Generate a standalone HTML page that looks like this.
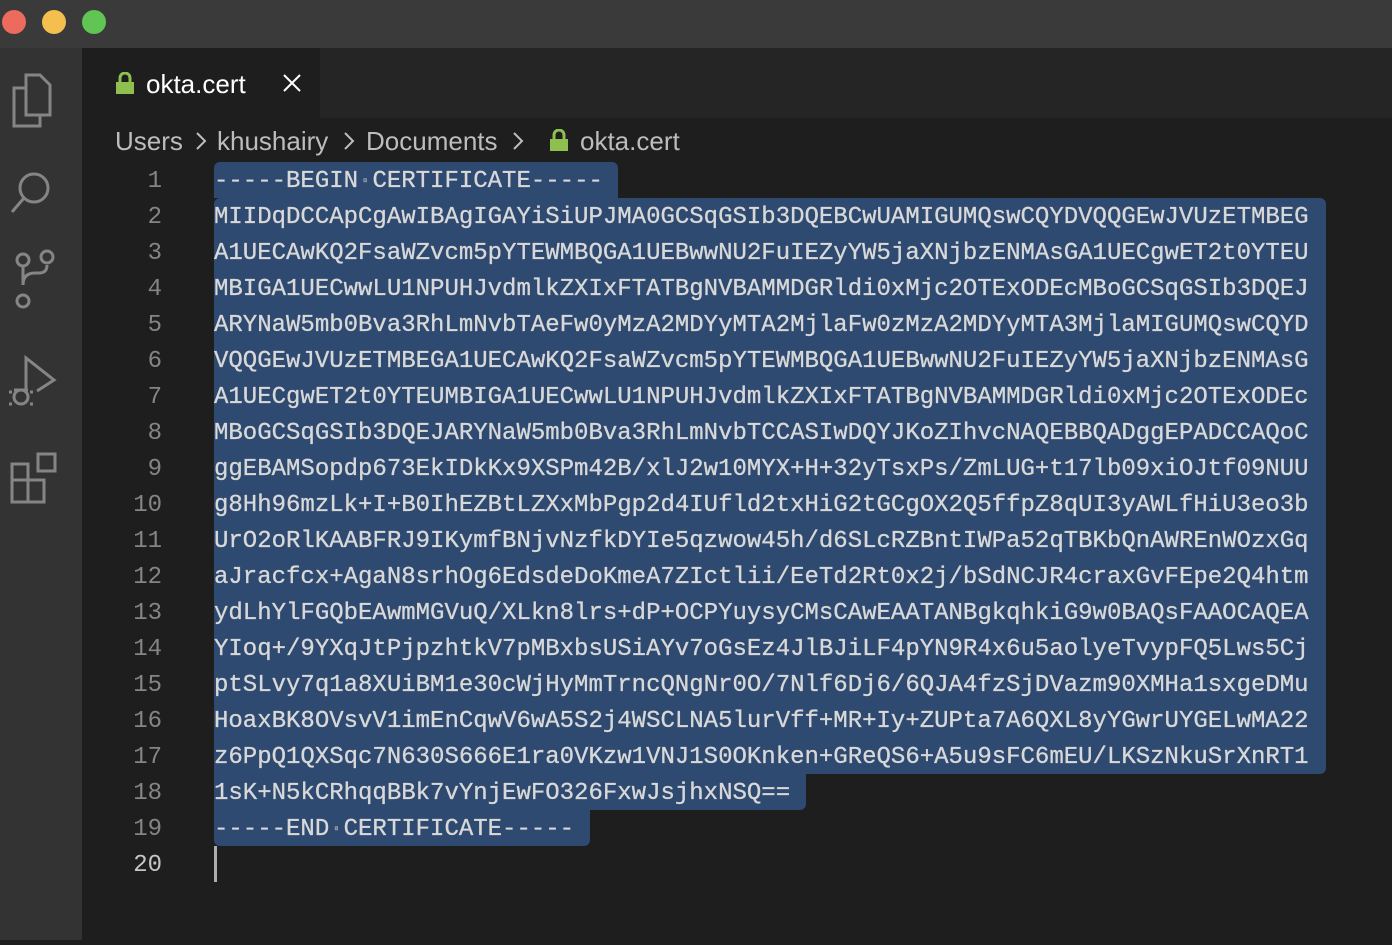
<!DOCTYPE html>
<html><head><meta charset="utf-8"><style>
html,body{margin:0;padding:0;width:1392px;height:940px;overflow:hidden;background:#1e1e1e;font-family:"Liberation Sans",sans-serif}
#title{position:absolute;left:0;top:0;width:1392px;height:48px;background:#3a3a3a}
.dot{position:absolute;top:10px;width:24px;height:24px;border-radius:50%}
#act{position:absolute;left:0;top:48px;width:82px;height:892px;background:#333333}
#tabs{position:absolute;left:82px;top:48px;width:1310px;height:70px;background:#252526}
#tab{position:absolute;left:0;top:0;width:238px;height:70px;background:#1e1e1e;color:#fff;font-size:26px}
.cr{position:absolute;top:126px;color:#bdbdbd;font-size:26px;white-space:nowrap}
.ln{position:absolute;left:100px;width:62px;text-align:right;color:#858585;font-family:"Liberation Mono",monospace;font-size:24px;line-height:36px}
.code{position:absolute;left:214px;font-family:"Liberation Mono",monospace;font-size:24px;line-height:36px;color:#d8d8d8;white-space:pre;-webkit-text-stroke:0.3px #d8d8d8}
.sel{position:absolute;left:214px;height:36px;background:#2f4a70}
</style></head><body>
<div id="title">
<div class="dot" style="left:2px;background:#ec6a5e"></div>
<div class="dot" style="left:42px;background:#f4bf4f"></div>
<div class="dot" style="left:82px;background:#61c554"></div>
</div>
<div id="act">
<svg width="82" height="892" fill="none" stroke="#858585" stroke-width="3">
<path d="M26 27 h14 l10 10 v30 h-24z M26 40 h-12 v38 h26 v-11"/>
<circle cx="34" cy="140" r="14"/><path d="M24 150 L12 164"/>
<path d="M23 217 v20 M23 237 q0-12 12-12 h4 q8 0 8-8"/><circle cx="23" cy="212" r="6"/><circle cx="47" cy="209" r="6"/><circle cx="23" cy="253" r="6"/>
<path d="M26 342 v-32 l28 22 -17 11"/><circle cx="21" cy="349" r="7"/><path d="M12 344 h-3 M30 344 h3 M12 356 h-3 M30 356 h3 M14 342 h14"/>
<path d="M12 432 h32 v22 h-32z M12 432 v-16 h16 v38 M38 406 h17 v17 h-17z"/>
</svg>
</div>
<div id="tabs"><div id="tab">
<svg style="position:absolute;left:34px;top:24px" width="18" height="22"><path d="M4 10 v-4 a5 5 0 0 1 10 0 v4" fill="none" stroke="#8fbf4f" stroke-width="3"/><rect x="0" y="10" width="18" height="12" fill="#8fbf4f"/></svg>
<span style="position:absolute;left:64px;top:21px">okta.cert</span>
<svg style="position:absolute;left:201px;top:26px" width="18" height="18"><path d="M1 1 L17 17 M17 1 L1 17" stroke="#fff" stroke-width="2"/></svg>
</div></div>
<span class="cr" style="left:115px">Users</span>
<svg style="position:absolute;left:195px;top:131px" width="12" height="20"><path d="M2 2 L10 10 L2 18" fill="none" stroke="#bdbdbd" stroke-width="2"/></svg>
<span class="cr" style="left:217px">khushairy</span>
<svg style="position:absolute;left:343px;top:131px" width="12" height="20"><path d="M2 2 L10 10 L2 18" fill="none" stroke="#bdbdbd" stroke-width="2"/></svg>
<span class="cr" style="left:366px">Documents</span>
<svg style="position:absolute;left:512px;top:131px" width="12" height="20"><path d="M2 2 L10 10 L2 18" fill="none" stroke="#bdbdbd" stroke-width="2"/></svg>
<svg style="position:absolute;left:550px;top:129px" width="18" height="22"><path d="M4 10 v-4 a5 5 0 0 1 10 0 v4" fill="none" stroke="#8fbf4f" stroke-width="3"/><rect x="0" y="10" width="18" height="12" fill="#8fbf4f"/></svg>
<span class="cr" style="left:580px">okta.cert</span>

<div class="sel" style="top:162px;width:404px;border-radius:6px 6px 0 0"></div>
<div class="sel" style="top:198px;width:1112px;height:576px;border-radius:6px 6px 6px 0"></div>
<div class="sel" style="top:774px;width:592px;border-radius:0 0 6px 0"></div>
<div class="sel" style="top:810px;width:376px;border-radius:0 0 6px 6px"></div>

<div class="ln" style="top:164px">1<br>2<br>3<br>4<br>5<br>6<br>7<br>8<br>9<br>10<br>11<br>12<br>13<br>14<br>15<br>16<br>17<br>18<br>19<br><span style="color:#c6c6c6">20</span></div>
<div class="code" style="top:164px">-----BEGIN<span style="color:#6a7a90">·</span>CERTIFICATE-----
MIIDqDCCApCgAwIBAgIGAYiSiUPJMA0GCSqGSIb3DQEBCwUAMIGUMQswCQYDVQQGEwJVUzETMBEG
A1UECAwKQ2FsaWZvcm5pYTEWMBQGA1UEBwwNU2FuIEZyYW5jaXNjbzENMAsGA1UECgwET2t0YTEU
MBIGA1UECwwLU1NPUHJvdmlkZXIxFTATBgNVBAMMDGRldi0xMjc2OTExODEcMBoGCSqGSIb3DQEJ
ARYNaW5mb0Bva3RhLmNvbTAeFw0yMzA2MDYyMTA2MjlaFw0zMzA2MDYyMTA3MjlaMIGUMQswCQYD
VQQGEwJVUzETMBEGA1UECAwKQ2FsaWZvcm5pYTEWMBQGA1UEBwwNU2FuIEZyYW5jaXNjbzENMAsG
A1UECgwET2t0YTEUMBIGA1UECwwLU1NPUHJvdmlkZXIxFTATBgNVBAMMDGRldi0xMjc2OTExODEc
MBoGCSqGSIb3DQEJARYNaW5mb0Bva3RhLmNvbTCCASIwDQYJKoZIhvcNAQEBBQADggEPADCCAQoC
ggEBAMSopdp673EkIDkKx9XSPm42B/xlJ2w10MYX+H+32yTsxPs/ZmLUG+t17lb09xiOJtf09NUU
g8Hh96mzLk+I+B0IhEZBtLZXxMbPgp2d4IUfld2txHiG2tGCgOX2Q5ffpZ8qUI3yAWLfHiU3eo3b
UrO2oRlKAABFRJ9IKymfBNjvNzfkDYIe5qzwow45h/d6SLcRZBntIWPa52qTBKbQnAWREnWOzxGq
aJracfcx+AgaN8srhOg6EdsdeDoKmeA7ZIctlii/EeTd2Rt0x2j/bSdNCJR4craxGvFEpe2Q4htm
ydLhYlFGQbEAwmMGVuQ/XLkn8lrs+dP+OCPYuysyCMsCAwEAATANBgkqhkiG9w0BAQsFAAOCAQEA
YIoq+/9YXqJtPjpzhtkV7pMBxbsUSiAYv7oGsEz4JlBJiLF4pYN9R4x6u5aolyeTvypFQ5Lws5Cj
ptSLvy7q1a8XUiBM1e30cWjHyMmTrncQNgNr0O/7Nlf6Dj6/6QJA4fzSjDVazm90XMHa1sxgeDMu
HoaxBK8OVsvV1imEnCqwV6wA5S2j4WSCLNA5lurVff+MR+Iy+ZUPta7A6QXL8yYGwrUYGELwMA22
z6PpQ1QXSqc7N630S666E1ra0VKzw1VNJ1S0OKnken+GReQS6+A5u9sFC6mEU/LKSzNkuSrXnRT1
1sK+N5kCRhqqBBk7vYnjEwFO326FxwJsjhxNSQ==
-----END<span style="color:#6a7a90">·</span>CERTIFICATE-----
</div>
<div style="position:absolute;left:214px;top:846px;width:3px;height:36px;background:#aeafad"></div>
</body></html>
